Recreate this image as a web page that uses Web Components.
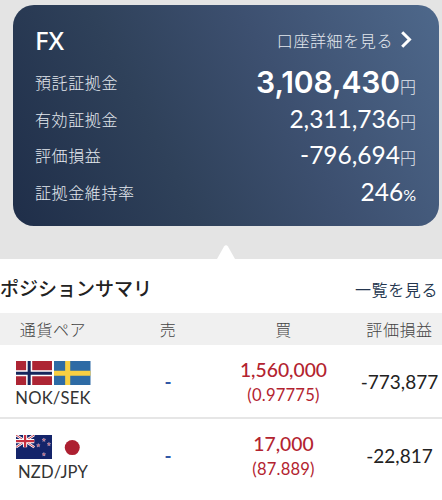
<!DOCTYPE html>
<html lang="ja">
<head>
<meta charset="utf-8">
<meta name="viewport" content="width=device-width, initial-scale=1">
<title>FX</title>
<style>
  body {
    margin: 0;
    height: 500px;
    overflow: hidden;
    background: #fff;
    font-family: Lato, "Noto Sans CJK JP", sans-serif;
    --navy: #24364f;
    --buy: #b3232f;
    --sell: #3158a6;
  }
</style>
</head>
<body>
<fx-account-page></fx-account-page>

<script>
// fx-amount-row: one label / value line of the account card
class FxAmountRow extends HTMLElement {
  constructor() {
    super();
    this.attachShadow({ mode: 'open' });
  }

  connectedCallback() {
    this.shadowRoot.innerHTML = `
      <style>
        :host {
          display: flex;
          justify-content: space-between;
          align-items: flex-start;
          height: 36.5px;
          line-height: 36px;
          white-space: nowrap;
        }
        .label { font-size: 16px; font-weight: 300; letter-spacing: 0.6px; color: #e3e8ee; }
        .amount { margin-top: -1px; }
        .value { font-size: 24.5px; color: #fff; }
        .unit { font-size: 16px; font-weight: 300; color: #e3e8ee; }
        .unit.percent { font-weight: 400; color: #fff; }
        :host([strong]) .value {
          font: 600 30px/36px Inter, sans-serif;
          letter-spacing: -0.1px;
        }
      </style>
      <span class="label">${this.getAttribute('label')}</span>
      <span class="amount"><span class="value"><slot></slot></span><span class="unit ${this.getAttribute('unit') === '%' ? 'percent' : ''}">${this.getAttribute('unit')}</span></span>
    `;
  }
}
customElements.define('fx-amount-row', FxAmountRow);

// fx-account-card: dark panel with heading and detail link
class FxAccountCard extends HTMLElement {
  constructor() {
    super();
    this.attachShadow({ mode: 'open' }).innerHTML = `
      <style>
        :host {
          display: block;
          box-sizing: border-box;
          height: 221px;
          padding: 17px 23px 0 22px;
          border-radius: 21px;
          background: linear-gradient(63deg, #1f2e49 0%, #2f415a 35%, #3d5070 63%, #4e688b 100%);
        }
        header {
          display: flex;
          justify-content: space-between;
          align-items: center;
          height: 35px;
        }
        h1 {
          margin: 0;
          font: 500 25.5px/34px "Noto Sans", sans-serif;
          color: #fff;
        }
        .more {
          display: flex;
          align-items: center;
          gap: 8px;
          padding-right: 4px;
          font-size: 16px;
          font-weight: 300;
          letter-spacing: 0.6px;
          color: #e3e8ee;
        }
        .rows { padding-top: 8px; }
      </style>
      <header>
        <h1><slot name="title"></slot></h1>
        <span class="more">
          <slot name="more"></slot>
          <svg width="11" height="17" viewBox="0 0 11 17" fill="none" stroke="#fff" stroke-width="3">
            <path d="M1.2 1.2 8.5 8.5 1.2 15.8"/>
          </svg>
        </span>
      </header>
      <div class="rows"><slot></slot></div>
    `;
  }
}
customElements.define('fx-account-card', FxAccountCard);

// fx-flag: country flag, 36 x 24
const FLAGS = {
  no: `
    <path fill="#ad2534" d="M0 0h36v24H0z"/>
    <path stroke="#fff" stroke-width="6" d="M13 0v24M0 12h36"/>
    <path stroke="#14265c" stroke-width="3" d="M13 0v24M0 12h36"/>`,
  se: `
    <path fill="#2e6ba5" d="M0 0h36v24H0z"/>
    <path stroke="#f8cf42" stroke-width="5" d="M13.5 0v24M0 12h36"/>`,
  nz: `
    <path fill="#14246a" d="M0 0h36v24H0z"/>
    <path stroke="#fff" stroke-width="2.6" d="M0 0 18 12M18 0 0 12"/>
    <path stroke="#c62f40" stroke-width="0.9" d="M0 0 18 12M18 0 0 12"/>
    <path stroke="#fff" stroke-width="4" d="M9 0v12M0 6h18"/>
    <path stroke="#c62f40" stroke-width="2.2" d="M9 0v12M0 6h18"/>
    ${[[27.5, 4.8], [22, 10.2], [32.5, 9], [27.5, 19]].map(([x, y]) => `
      <path transform="translate(${x} ${y})" fill="#cf4359" stroke="#d9dcec" stroke-width="0.4"
        d="M0-1.9.45-.6 1.8-.6.7.25 1.1 1.55 0 .75-1.1 1.55-.7.25-1.8-.6-.45-.6z"/>`).join('')}`,
  jp: `
    <path fill="#fff" d="M0 0h36v24H0z"/>
    <circle cx="18" cy="12.3" r="7.4" fill="#ad2031"/>`,
};

class FxFlag extends HTMLElement {
  constructor() {
    super();
    this.attachShadow({ mode: 'open' });
  }

  connectedCallback() {
    this.shadowRoot.innerHTML = `
      <style>
        :host { display: block; width: 36.5px; height: 24.5px; }
        svg { display: block; width: 100%; height: 100%; }
      </style>
      <svg viewBox="0 0 36 24" preserveAspectRatio="none">${FLAGS[this.getAttribute('country')]}</svg>
    `;
  }
}
customElements.define('fx-flag', FxFlag);

// fx-position-row: currency pair, sell, buy and profit/loss
class FxPositionRow extends HTMLElement {
  constructor() {
    super();
    this.attachShadow({ mode: 'open' });
  }

  connectedCallback() {
    const { pair, flags, sell, buy, rate, profit } = this.dataset;
    this.shadowRoot.innerHTML = `
      <style>
        :host {
          display: grid;
          grid-template-columns: 106px 124px 107px 20px 1fr;
          align-items: center;
          box-sizing: border-box;
          height: 74px;
          border-bottom: 2px solid #e6e6e6;
          text-align: center;
          white-space: nowrap;
        }
        :host(:last-child) { border-bottom-color: transparent; }
        .flags { display: flex; justify-content: center; gap: 2px; margin-top: 7px; }
        .pair { font-size: 16.6px; line-height: 20px; letter-spacing: 0.2px; color: #333; margin-top: 3px; }
        .sell { font-size: 19px; font-weight: 700; color: var(--sell); }
        .buy { color: var(--buy); font-size: 19.3px; line-height: 25px; font-weight: 500; padding-top: 3px; }
        .rate { color: var(--buy); font-size: 16.6px; line-height: 26px; letter-spacing: 0.2px; }
        .profit { grid-column: 5; font-size: 19px; color: #222; }
      </style>
      <div>
        <div class="flags">${flags.split(' ').map(f => `<fx-flag country="${f}"></fx-flag>`).join('')}</div>
        <div class="pair">${pair}</div>
      </div>
      <div class="sell">${sell}</div>
      <div>
        <div class="buy">${buy}</div>
        <div class="rate">(${rate})</div>
      </div>
      <div class="profit">${profit}</div>
    `;
  }
}
customElements.define('fx-position-row', FxPositionRow);

// fx-position-summary: section heading, column names and rows
class FxPositionSummary extends HTMLElement {
  constructor() {
    super();
    this.attachShadow({ mode: 'open' }).innerHTML = `
      <style>
        :host { display: block; background: #fff; }
        header {
          display: flex;
          justify-content: space-between;
          align-items: center;
          height: 54px;
          padding: 2px 4px 0 0;
          box-sizing: border-box;
          white-space: nowrap;
        }
        h2 { margin: 0; font-size: 19px; font-weight: 500; color: #222; }
        .all { font-size: 16px; font-weight: 350; letter-spacing: 0.6px; color: var(--navy); padding-top: 3px; }
        .columns {
          display: grid;
          grid-template-columns: 106px 124px 107px 20px 1fr;
          height: 32px;
          line-height: 33px;
          background: #f0f0f0;
          color: #444;
          font-size: 16px;
          font-weight: 300;
          letter-spacing: 0.6px;
          text-align: center;
          white-space: nowrap;
        }
        .profit { grid-column: 5; }
      </style>
      <header>
        <h2><slot name="title"></slot></h2>
        <span class="all"><slot name="more"></slot></span>
      </header>
      <div class="columns"><span>通貨ペア</span><span>売</span><span>買</span><span class="profit">評価損益</span></div>
      <slot></slot>
    `;
  }
}
customElements.define('fx-position-summary', FxPositionSummary);

class FxAccountPage extends HTMLElement {
  constructor() {
    super();
    this.attachShadow({ mode: 'open' }).innerHTML = `
      <style>
        :host { display: block; width: 442px; }
        .top {
          display: flow-root;
          box-sizing: border-box;
          height: 259px;
          padding: 5px 3px 0 13px;
          background: #e4e4e4;
        }
        .notch { display: block; margin: 19px auto 0 204px; }
      </style>
      <div class="top">
        <fx-account-card>
          <span slot="title">FX</span>
          <span slot="more">口座詳細を見る</span>
          <fx-amount-row label="預託証拠金" unit="円" strong>3,108,430</fx-amount-row>
          <fx-amount-row label="有効証拠金" unit="円">2,311,736</fx-amount-row>
          <fx-amount-row label="評価損益" unit="円">-796,694</fx-amount-row>
          <fx-amount-row label="証拠金維持率" unit="%">246</fx-amount-row>
        </fx-account-card>
        <svg class="notch" width="18" height="14" viewBox="0 0 18 14" fill="#fff">
          <path d="M0 14 7 1.5Q9-.8 11 1.5L18 14z"/>
        </svg>
      </div>
      <fx-position-summary>
        <span slot="title">ポジションサマリ</span>
        <span slot="more">一覧を見る</span>
        <fx-position-row data-pair="NOK/SEK" data-flags="no se" data-sell="-" data-buy="1,560,000" data-rate="0.97775" data-profit="-773,877"></fx-position-row>
        <fx-position-row data-pair="NZD/JPY" data-flags="nz jp" data-sell="-" data-buy="17,000" data-rate="87.889" data-profit="-22,817"></fx-position-row>
      </fx-position-summary>
    `;
  }
}
customElements.define('fx-account-page', FxAccountPage);
</script>
</body>
</html>
